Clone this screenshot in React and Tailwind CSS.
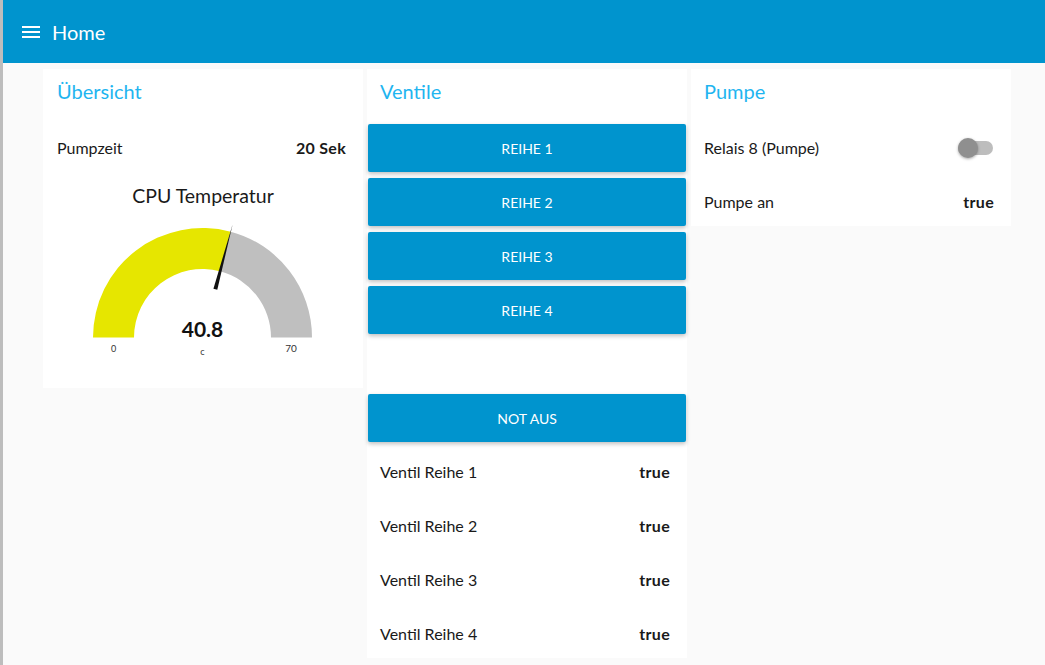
import React from "react";

const font = { fontFamily: "Lato, 'Noto Sans', sans-serif" };

function Row({ label, value, children, pl = "pl-[13px]" }) {
  return (
    <div className={`h-[48px] flex items-center justify-between ${pl} pr-[17px] text-[16px] text-[#1a1a1a]`}>
      <span>{label}</span>
      {value !== undefined ? <span className="font-bold tracking-[0.3px]">{value}</span> : children}
    </div>
  );
}

function Btn({ children }) {
  return (
    <div className="px-[1px]">
      <div className="h-[48px] flex items-center justify-center bg-[#0094ce] text-white text-[14px] rounded-[2px] shadow-[0_2px_4px_rgba(0,0,0,0.25)]">
        {children}
      </div>
    </div>
  );
}

function Title({ children, pl = "pl-[13px]" }) {
  return (
    <div className={`h-[44px] flex items-center ${pl} text-[20px] text-[#1fb5f0]`}>{children}</div>
  );
}

function Gauge() {
  return (
    <div className="h-[210px] flex flex-col">
      <div className="h-[36px] flex items-center justify-center text-[19.5px] text-[#1a1a1a]">CPU Temperatur</div>
      <svg width="320" height="174" viewBox="0 0 320 174">
        <path d="M50 123.5 A109.5 109.5 0 0 1 187.65 17.68 L177.11 57.3 A68.5 68.5 0 0 0 91 123.5 Z" fill="#e6e600" />
        <path d="M187.65 17.68 A109.5 109.5 0 0 1 269 123.5 L228 123.5 A68.5 68.5 0 0 0 177.11 57.3 Z" fill="#bfbfbf" />
        <path d="M174.29 75.69 L189.58 10.43 L170.43 74.67 Z" fill="#111" />
        <text x="159.5" y="122.7" textAnchor="middle" fontSize="21" fontWeight="bold" fill="#111" style={font}>40.8</text>
        <text x="159.5" y="141" textAnchor="middle" fontSize="9" fill="#333" style={font}>c</text>
        <text x="70.7" y="138" textAnchor="middle" fontSize="9" fill="#333" style={font}>0</text>
        <text x="248" y="138" textAnchor="middle" fontSize="10" fill="#333" style={font}>70</text>
      </svg>
    </div>
  );
}

export default function App() {
  return (
    <div className="w-[1045px] h-[665px] flex bg-[#fafafa] overflow-hidden" style={font}>
      <div className="w-[3px] h-full bg-[#bdbdbd]" />
      <div className="flex-1 flex flex-col">
        <div className="h-[63px] bg-[#0094ce] flex items-center text-white shrink-0">
          <svg width="18" height="12" viewBox="0 0 18 12" className="ml-[19px]">
            <rect x="0" y="0" width="18" height="2" fill="white" />
            <rect x="0" y="5" width="18" height="2" fill="white" />
            <rect x="0" y="10" width="18" height="2" fill="white" />
          </svg>
          <span className="ml-[12px] text-[20px]">Home</span>
        </div>
        <div className="flex items-start gap-[4px] pl-[40px] pt-[6px]">
          <div className="w-[320px] bg-white flex flex-col">
            <Title pl="pl-[14px]">Übersicht</Title>
            <div className="pt-[11px] flex flex-col gap-[6px]">
              <Row label="Pumpzeit" value="20 Sek" pl="pl-[14px]" />
              <Gauge />
            </div>
          </div>
          <div className="w-[320px] bg-white flex flex-col">
            <Title>Ventile</Title>
            <div className="pt-[11px] flex flex-col gap-[6px]">
              <Btn>REIHE 1</Btn>
              <Btn>REIHE 2</Btn>
              <Btn>REIHE 3</Btn>
              <Btn>REIHE 4</Btn>
              <div className="h-[48px]" />
              <Btn>NOT AUS</Btn>
              <Row label="Ventil Reihe 1" value="true" />
              <Row label="Ventil Reihe 2" value="true" />
              <Row label="Ventil Reihe 3" value="true" />
              <Row label="Ventil Reihe 4" value="true" />
            </div>
          </div>
          <div className="w-[320px] bg-white flex flex-col">
            <Title>Pumpe</Title>
            <div className="pt-[11px] flex flex-col gap-[6px]">
              <Row label="Relais 8 (Pumpe)">
                <div className="relative w-[35px] h-[14px] rounded-full bg-[#bdbdbd] mr-[1px]">
                  <div className="absolute left-0 top-[-3px] w-[20px] h-[20px] rounded-full bg-[#8f8f8f] shadow-[0_1px_3px_rgba(0,0,0,0.35)]" />
                </div>
              </Row>
              <Row label="Pumpe an" value="true" />
            </div>
          </div>
        </div>
      </div>
    </div>
  );
}
